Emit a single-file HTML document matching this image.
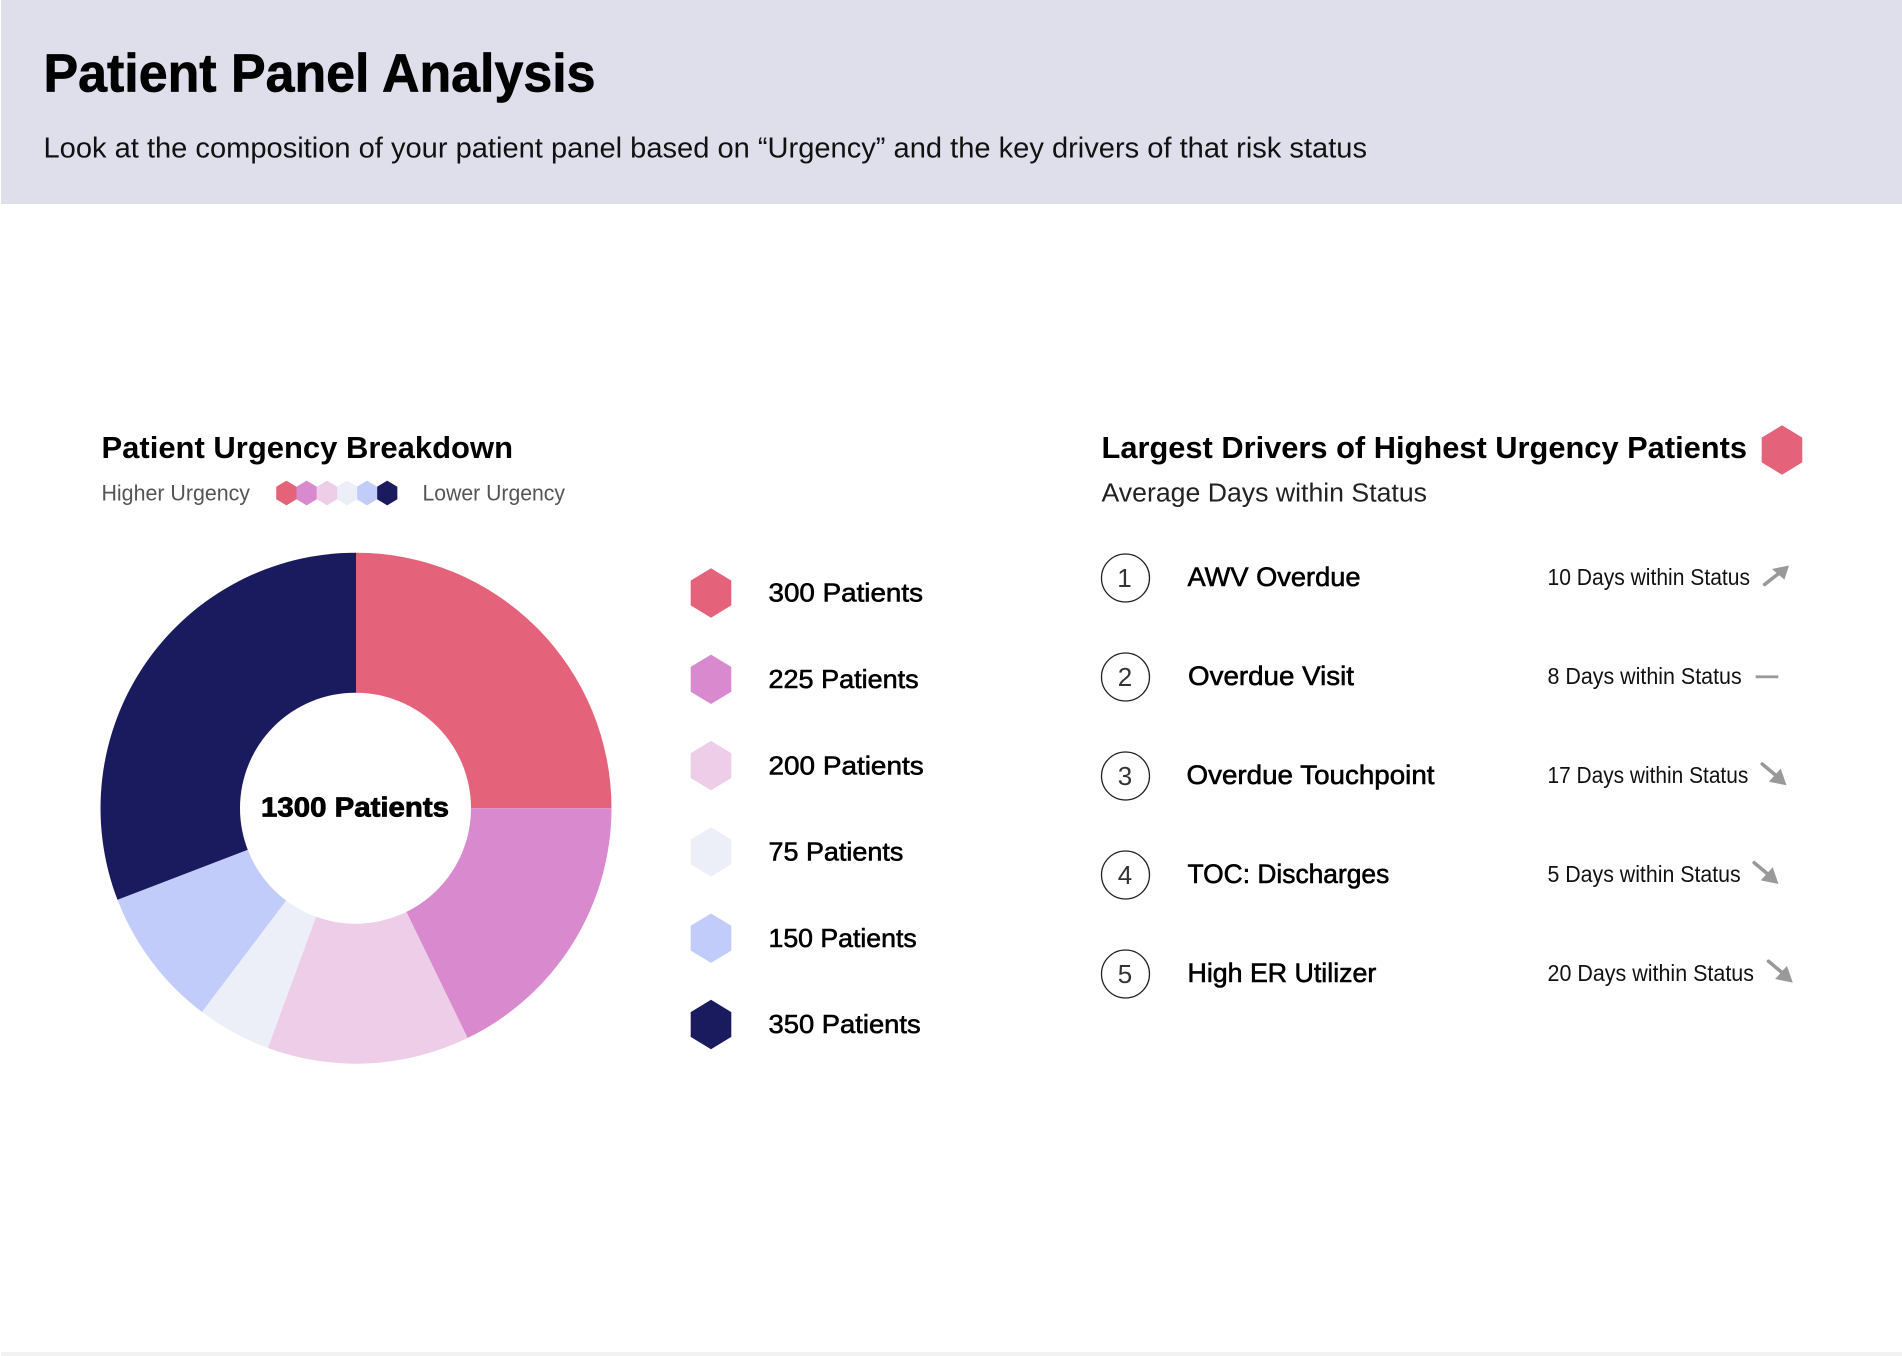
<!DOCTYPE html>
<html lang="en">
<head>
<meta charset="utf-8">
<title>Patient Panel Analysis</title>
<style>
html,body{margin:0;padding:0;background:#fff;width:1902px;height:1356px;overflow:hidden}
svg{display:block}
text{font-family:"Liberation Sans",sans-serif;fill:#000}
.b{font-weight:700}
.m{stroke:#000;stroke-width:.6px}
</style>
</head>
<body>
<svg width="1902" height="1356" viewBox="0 0 1902 1356" xmlns="http://www.w3.org/2000/svg">
<defs>
<polygon id="h" points="0,-24.7 20.3,-12.4 20.3,12.4 0,24.7 -20.3,12.4 -20.3,-12.4"/>
<g id="down" fill="#999" stroke="none">
<path d="M1762.2 764L1776 775.5" stroke="#999" stroke-width="3.6" stroke-linecap="round" fill="none"/>
<polygon points="1786.5,785.3 1768.8,781.7 1780.7,768.6"/>
</g>
</defs>

<rect width="1902" height="1356" fill="#fff"/>
<rect x="1" y="0" width="1901" height="204" fill="#DFDFEB"/>
<rect x="1" y="1352" width="1901" height="4" fill="#F2F2F2"/>

<text class="b" x="43.5" y="91.5" font-size="54" textLength="552" lengthAdjust="spacingAndGlyphs" style="stroke:#000;stroke-width:.7px">Patient Panel Analysis</text>
<text x="43.5" y="157.5" font-size="29" textLength="1323.5" lengthAdjust="spacingAndGlyphs" style="fill:#111">Look at the composition of your patient panel based on “Urgency” and the key drivers of that risk status</text>

<text class="b" x="101.5" y="458" font-size="30.5" textLength="411.5" lengthAdjust="spacingAndGlyphs">Patient Urgency Breakdown</text>
<text x="101.5" y="500.5" font-size="22" textLength="148.5" lengthAdjust="spacingAndGlyphs" style="fill:#555">Higher Urgency</text>
<text x="422.5" y="500.5" font-size="22" textLength="142.5" lengthAdjust="spacingAndGlyphs" style="fill:#555">Lower Urgency</text>

<use href="#h" transform="translate(387.2 493) scale(.5)" fill="#1A1A5E"/>
<use href="#h" transform="translate(367 493) scale(.5)" fill="#C2CCFB"/>
<use href="#h" transform="translate(347 493) scale(.5)" fill="#ECEEF8"/>
<use href="#h" transform="translate(327 493) scale(.5)" fill="#EECDE8"/>
<use href="#h" transform="translate(306.6 493) scale(.5)" fill="#D98ACF"/>
<use href="#h" transform="translate(286.4 493) scale(.5)" fill="#E56379"/>

<g transform="translate(0 -.8)">
<path d="M356 809V553.5A255.5 255.5 0 0 1 611.5 809Z" fill="#E5637A"/>
<path d="M356 809H611.5A255.5 255.5 0 0 1 467.6 1038.8Z" fill="#D98ACF"/>
<path d="M356 809L467.6 1038.8A255.5 255.5 0 0 1 267.8 1048.8Z" fill="#EECDE8"/>
<path d="M356 809L267.8 1048.8A255.5 255.5 0 0 1 201.9 1012.8Z" fill="#ECEEF8"/>
<path d="M356 809L201.9 1012.8A255.5 255.5 0 0 1 117.5 900.6Z" fill="#C2CCFB"/>
<path d="M356 809L117.5 900.6A255.5 255.5 0 0 1 356 553.5Z" fill="#1A1A5E"/>
<circle cx="355.5" cy="809" r="115.5" fill="#fff"/>
</g>
<text class="b" x="261" y="816.5" font-size="27.5" textLength="188" lengthAdjust="spacingAndGlyphs" style="stroke:#000;stroke-width:.8px">1300 Patients</text>

<use href="#h" x="711" y="593" fill="#E5637A"/>
<use href="#h" x="711" y="679.3" fill="#D98ACF"/>
<use href="#h" x="711" y="765.6" fill="#EECDE8"/>
<use href="#h" x="711" y="851.9" fill="#ECEEF8"/>
<use href="#h" x="711" y="938.2" fill="#C2CCFB"/>
<use href="#h" x="711" y="1024.5" fill="#1A1A5E"/>

<text class="m" x="768.5" y="601.7" font-size="26" textLength="154.5" lengthAdjust="spacingAndGlyphs">300 Patients</text>
<text class="m" x="768.5" y="688" font-size="26" textLength="150.2" lengthAdjust="spacingAndGlyphs">225 Patients</text>
<text class="m" x="768.5" y="774.3" font-size="26" textLength="155.2" lengthAdjust="spacingAndGlyphs">200 Patients</text>
<text class="m" x="768.5" y="860.6" font-size="26" textLength="134.8" lengthAdjust="spacingAndGlyphs">75 Patients</text>
<text class="m" x="768.5" y="946.9" font-size="26" textLength="148.2" lengthAdjust="spacingAndGlyphs">150 Patients</text>
<text class="m" x="768.5" y="1033.2" font-size="26" textLength="152.2" lengthAdjust="spacingAndGlyphs">350 Patients</text>

<text class="b" x="1101.5" y="458" font-size="31" textLength="645.5" lengthAdjust="spacingAndGlyphs">Largest Drivers of Highest Urgency Patients</text>
<use href="#h" x="1782" y="450" fill="#E5637A"/>
<text x="1101.5" y="501.5" font-size="25.5" textLength="325.5" lengthAdjust="spacingAndGlyphs" style="fill:#222">Average Days within Status</text>

<g fill="none" stroke="#222" stroke-width="1.3">
<circle cx="1125.5" cy="578" r="24"/>
<circle cx="1125.5" cy="677" r="24"/>
<circle cx="1125.5" cy="776" r="24"/>
<circle cx="1125.5" cy="875" r="24"/>
<circle cx="1125.5" cy="974" r="24"/>
</g>
<g font-size="26" text-anchor="middle">
<text x="1124.5" y="587" style="fill:#333">1</text>
<text x="1125" y="686" style="fill:#333">2</text>
<text x="1125" y="785" style="fill:#333">3</text>
<text x="1125" y="884" style="fill:#333">4</text>
<text x="1125" y="983" style="fill:#333">5</text>
</g>

<text class="m" x="1187.5" y="586" font-size="26.5" textLength="173" lengthAdjust="spacingAndGlyphs">AWV Overdue</text>
<text class="m" x="1188" y="685" font-size="26.5" textLength="166" lengthAdjust="spacingAndGlyphs">Overdue Visit</text>
<text class="m" x="1186.5" y="784" font-size="26.5" textLength="248" lengthAdjust="spacingAndGlyphs">Overdue Touchpoint</text>
<text class="m" x="1187.5" y="883" font-size="26.5" textLength="201.8" lengthAdjust="spacingAndGlyphs">TOC: Discharges</text>
<text class="m" x="1187.5" y="982" font-size="26.5" textLength="188.8" lengthAdjust="spacingAndGlyphs">High ER Utilizer</text>

<text x="1547.5" y="585" font-size="23" textLength="202.5" lengthAdjust="spacingAndGlyphs" style="fill:#111">10 Days within Status</text>
<text x="1547.5" y="684" font-size="23" textLength="194.2" lengthAdjust="spacingAndGlyphs" style="fill:#111">8 Days within Status</text>
<text x="1547.5" y="783" font-size="23" textLength="200.8" lengthAdjust="spacingAndGlyphs" style="fill:#111">17 Days within Status</text>
<text x="1547.5" y="882" font-size="23" textLength="193.2" lengthAdjust="spacingAndGlyphs" style="fill:#111">5 Days within Status</text>
<text x="1547.5" y="981" font-size="23" textLength="206.5" lengthAdjust="spacingAndGlyphs" style="fill:#111">20 Days within Status</text>

<path d="M1764.6 584.5L1778 574" stroke="#999" stroke-width="3.6" stroke-linecap="round" fill="none"/>
<polygon points="1789,565.5 1772,569 1784.4,579.6" fill="#999"/>
<rect x="1755.7" y="675.4" width="22.6" height="2.8" fill="#999"/>
<use href="#down"/>
<use href="#down" x="-8" y="98.7"/>
<use href="#down" x="6.3" y="197.3"/>
</svg>
</body>
</html>
